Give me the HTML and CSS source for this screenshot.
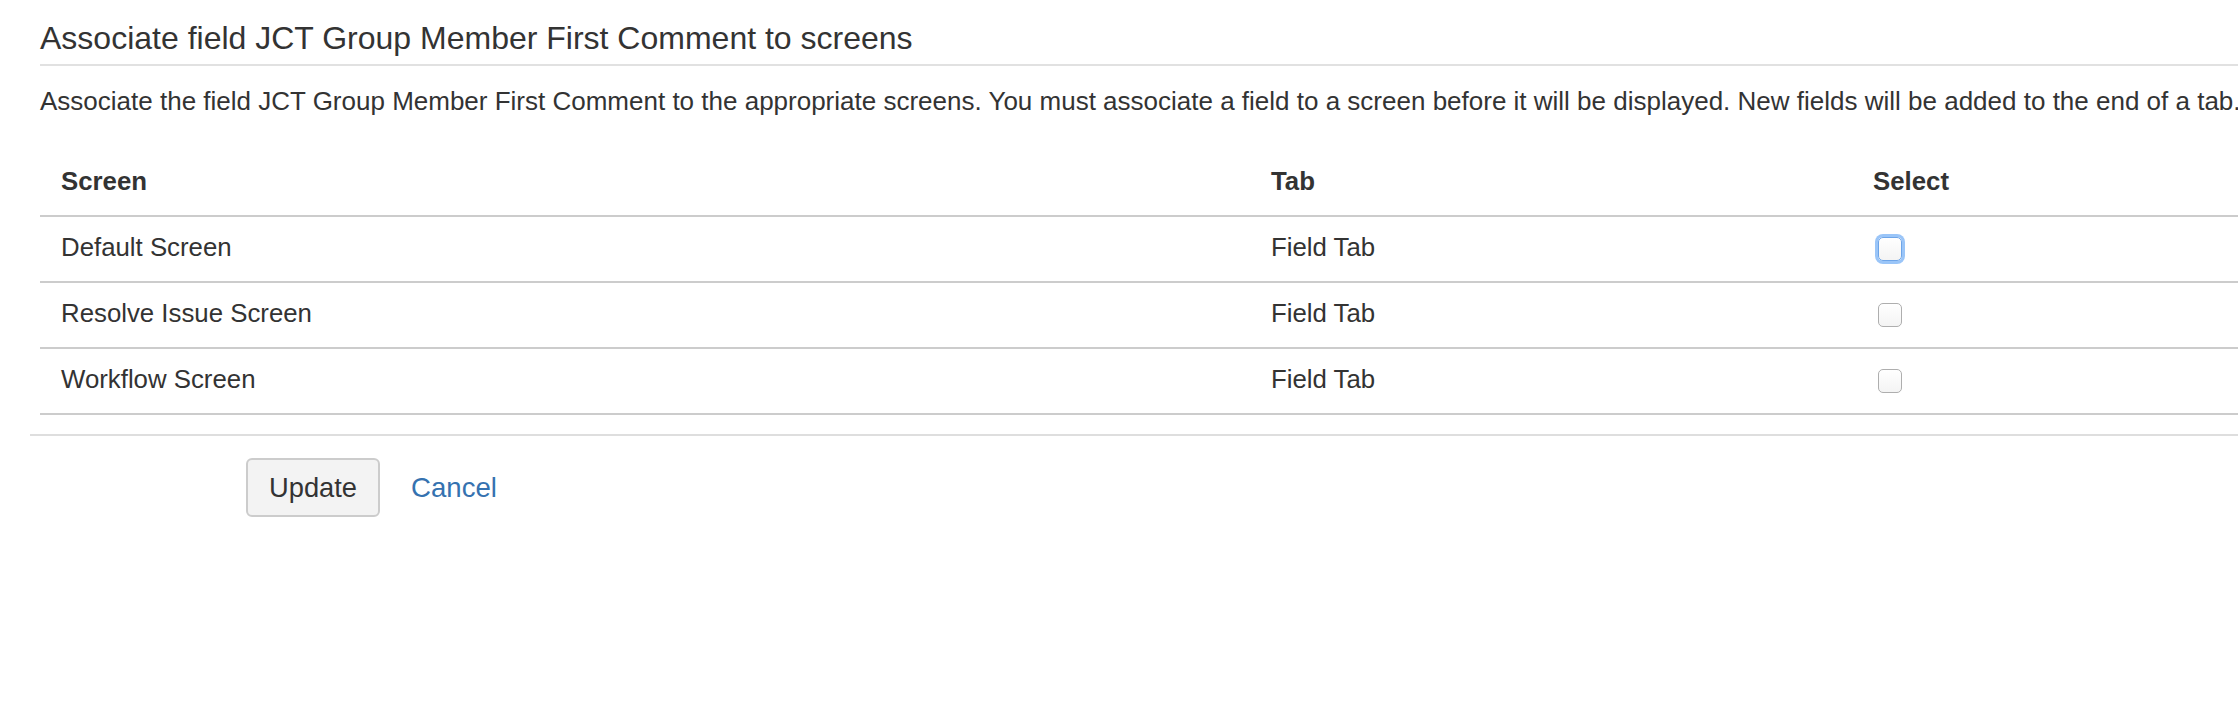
FILE: index.html
```html
<!DOCTYPE html>
<html lang="en">
<head>
    <meta charset="UTF-8">
    <meta name="viewport" content="width=device-width, initial-scale=1.0">
    <title>Associate field to screens</title>
    <link rel="stylesheet" href="styles.css">
</head>
<body>
    <div class="page">
        <h2 class="page-title">Associate field JCT Group Member First Comment to screens</h2>
        <p class="intro">Associate the field JCT Group Member First Comment to the appropriate screens. You must associate a field to a screen before it will be displayed. New fields will be added to the end of a tab.</p>

        <form id="screensForm" class="screens-form">
            <table class="screens">
                <colgroup>
                    <col class="col-screen">
                    <col class="col-tab">
                    <col>
                </colgroup>
                <thead>
                    <tr>
                        <th>Screen</th>
                        <th>Tab</th>
                        <th>Select</th>
                    </tr>
                </thead>
                <tbody>
                    <tr>
                        <td>Default Screen</td>
                        <td>Field Tab</td>
                        <td><input type="checkbox" class="check is-focused" name="screen" value="1"></td>
                    </tr>
                    <tr>
                        <td>Resolve Issue Screen</td>
                        <td>Field Tab</td>
                        <td><input type="checkbox" class="check" name="screen" value="2"></td>
                    </tr>
                    <tr>
                        <td>Workflow Screen</td>
                        <td>Field Tab</td>
                        <td><input type="checkbox" class="check" name="screen" value="3"></td>
                    </tr>
                </tbody>
            </table>

            <div class="buttons">
                <button type="submit" class="button">Update</button>
                <a href="#" class="cancel">Cancel</a>
            </div>
        </form>
    </div>
</body>
</html>
```

FILE: styles.css
```css
html, body {
    overflow: hidden;
}
body {
    font-family: "Liberation Sans", Arial, sans-serif;
    background-color: #fff;
    color: #333;
    margin: 0;
    padding: 0;
}
.page {
    padding-left: 30px;
}
.page-title {
    margin: 0 0 0 10px;
    padding: 18px 0 6px;
    font-size: 32px;
    font-weight: normal;
    line-height: 40px;
    border-bottom: 2px solid #e1e1e1;
}
.intro {
    margin: 19px 0 34px 10px;
    font-size: 26px;
    line-height: 32px;
    white-space: nowrap;
}
.screens {
    margin-left: 10px;
    width: calc(100% - 10px);
    table-layout: fixed;
    border-collapse: collapse;
    font-size: 25.8px;
}
.col-screen {
    width: 1210px;
}
.col-tab {
    width: 602px;
}
.screens th,
.screens td {
    padding: 13px 21px 17px;
    line-height: 34px;
    text-align: left;
    border-bottom: 2px solid #ccc;
}
.screens th {
    font-weight: bold;
}
.check {
    appearance: none;
    -webkit-appearance: none;
    width: 24px;
    height: 24px;
    margin: 0 0 0 5px;
    vertical-align: middle;
    border: 1.5px solid #aeaeae;
    border-radius: 5px;
    background: linear-gradient(#fff, #f4f4f4);
}
.check.is-focused {
    border-color: #6ea5e8;
    box-shadow: 0 0 0 3px #9ac5f8;
}
.buttons {
    margin-top: 19px;
    padding: 22px 0 0 216px;
    border-top: 2px solid #dedede;
    display: flex;
    align-items: baseline;
}
.button {
    font-family: inherit;
    font-size: 27.3px;
    line-height: 31px;
    padding: 12px 21px;
    color: #333;
    background-color: #f3f3f3;
    border: 2px solid #ccc;
    border-radius: 6px;
    cursor: pointer;
}
.cancel {
    margin-left: 31px;
    font-size: 27.6px;
    color: #3572b0;
    text-decoration: none;
}
```
